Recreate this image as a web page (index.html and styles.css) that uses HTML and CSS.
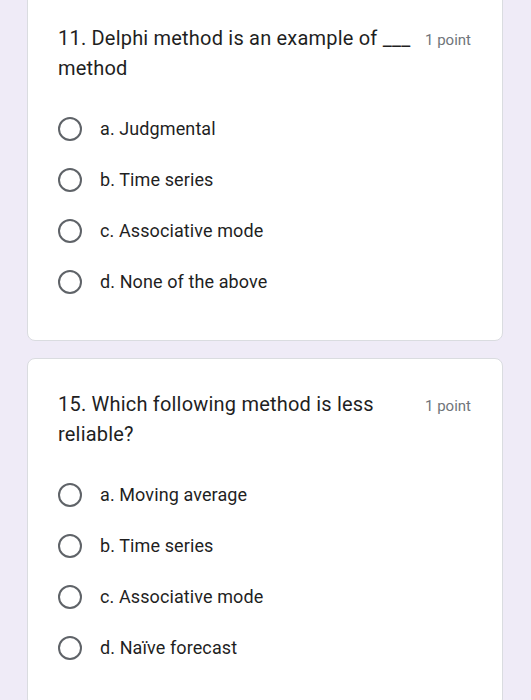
FILE: index.html
```html
<!DOCTYPE html>
<html lang="en">
<head>
<meta charset="utf-8">
<title>Quiz</title>
<link rel="stylesheet" href="styles.css">
</head>
<body>
<main class="form">
  <section class="card">
    <div class="q-head">
      <div class="q-title">11. Delphi method is an example of ___ method</div>
      <div class="q-points">1 point</div>
    </div>
    <ul class="options">
      <li class="option"><span class="radio"></span><span class="label">a. Judgmental</span></li>
      <li class="option"><span class="radio"></span><span class="label">b. Time series</span></li>
      <li class="option"><span class="radio"></span><span class="label">c. Associative mode</span></li>
      <li class="option"><span class="radio"></span><span class="label">d. None of the above</span></li>
    </ul>
  </section>
  <section class="card">
    <div class="q-head">
      <div class="q-title">15. Which following method is less reliable?</div>
      <div class="q-points">1 point</div>
    </div>
    <ul class="options">
      <li class="option"><span class="radio"></span><span class="label">a. Moving average</span></li>
      <li class="option"><span class="radio"></span><span class="label">b. Time series</span></li>
      <li class="option"><span class="radio"></span><span class="label">c. Associative mode</span></li>
      <li class="option"><span class="radio"></span><span class="label">d. Naïve forecast</span></li>
    </ul>
  </section>
</main>
</body>
</html>
```
FILE: styles.css
```css
html, body {
  margin: 0;
  padding: 0;
  background: #efebf7;
}
body {
  font-family: Roboto, "Liberation Sans", sans-serif;
  color: #1f1f1f;
  overflow: hidden;
}
.form {
  margin-top: -8px;
  padding: 0 28px 0 27px;
  display: flex;
  flex-direction: column;
  gap: 17px;
}
.card {
  background: #ffffff;
  border: 1px solid #dadce0;
  border-radius: 8px;
  padding: 30px 31px 33px 30px;
}
.q-head {
  display: flex;
  align-items: baseline;
}
.q-title {
  flex: 1;
  font-size: 20px;
  line-height: 30px;
  letter-spacing: 0.2px;
}
.q-points {
  margin-left: 12px;
  font-size: 15px;
  color: #70757a;
  white-space: nowrap;
}
.options {
  list-style: none;
  margin: 20px 0 0;
  padding: 0;
}
.option {
  display: flex;
  align-items: center;
  height: 51px;
}
.radio {
  box-sizing: border-box;
  width: 24px;
  height: 24px;
  border: 2px solid #5f6368;
  border-radius: 50%;
  flex: none;
}
.label {
  margin-left: 18px;
  font-size: 18px;
  letter-spacing: 0.1px;
}
```
